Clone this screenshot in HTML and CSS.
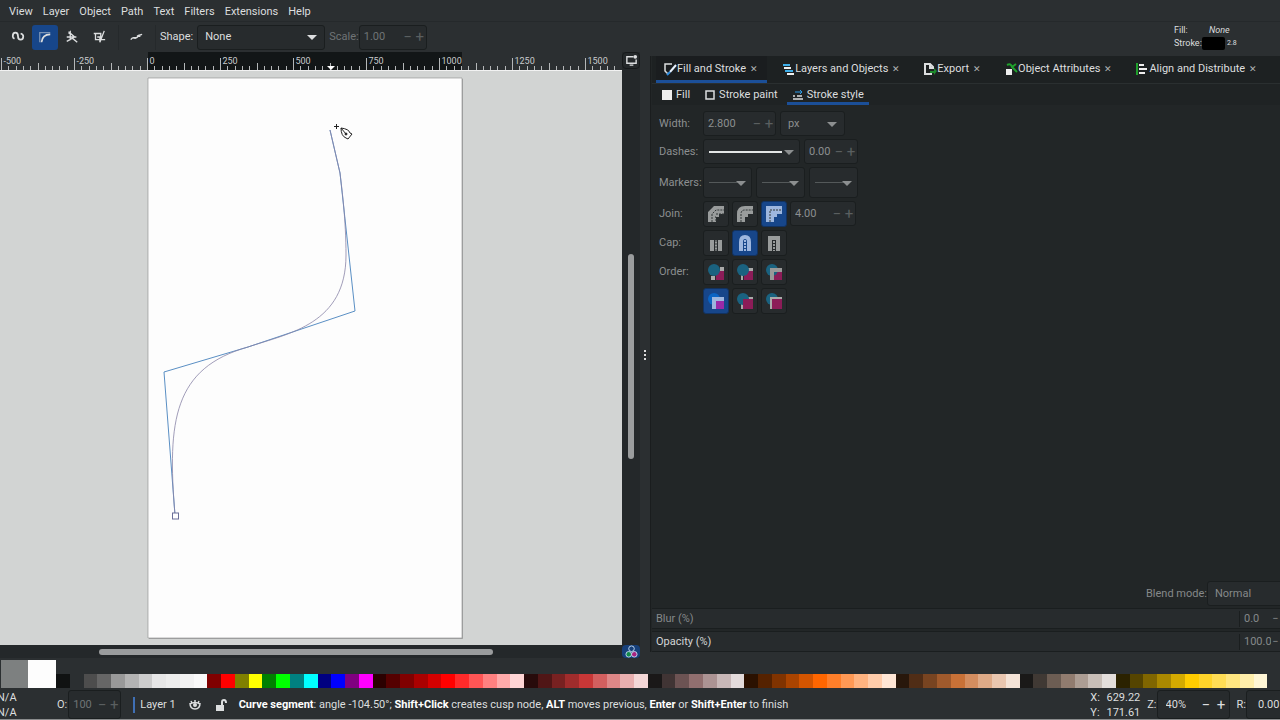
FILE: index.html
```
<!DOCTYPE html>
<html lang="en">
<head>
    <meta charset="UTF-8">
    <meta name="viewport" content="width=device-width, initial-scale=1.0">
    <title>Drawing - Inkscape</title>
    <link rel="stylesheet" href="styles.css">
</head>
<body>
    <svg class="defs" aria-hidden="true">
        <symbol id="join-bevel" viewBox="0 0 18 18"><path d="M1 17V7l6-6h10v8h-5v3H9v5z" fill="currentColor"/><path d="M5 17V9l4-4h8M9 9h8M8 12h1v5" class="dash"/></symbol>
        <symbol id="join-round" viewBox="0 0 18 18"><path d="M1 17V9q0-8 8-8h8v8h-5v3H9v5z" fill="currentColor"/><path d="M5 17V9q0-4 4-4h8" class="dash"/></symbol>
        <symbol id="join-miter" viewBox="0 0 18 18"><path d="M1 17V1h16v8h-5v3H9v5z" fill="currentColor"/><path d="M5 17V5h12" class="dash"/></symbol>
        <symbol id="cap-butt" viewBox="0 0 18 18"><path d="M3 6h4v11H3zM11 6h4v11h-4zM8 6h2v11H8z" fill="currentColor"/><path d="M9 6v11" class="dash"/></symbol>
        <symbol id="cap-round" viewBox="0 0 18 18"><path d="M5 17V8q0-5 4-5t4 5v9" fill="none" stroke="currentColor" stroke-width="4"/><path d="M9 6v11" stroke="currentColor" stroke-width="2" stroke-dasharray="2 1"/></symbol>
        <symbol id="cap-square" viewBox="0 0 18 18"><path d="M5 17V4h8v13" fill="none" stroke="currentColor" stroke-width="4"/><path d="M9 7v10" stroke="currentColor" stroke-width="2" stroke-dasharray="2 1"/></symbol>
    </svg>

    <nav class="menubar">
        <button>View</button>
        <button>Layer</button>
        <button>Object</button>
        <button>Path</button>
        <button>Text</button>
        <button>Filters</button>
        <button>Extensions</button>
        <button>Help</button>
    </nav>

    <header class="toolbar">
        <div class="modes">
            <button class="tool" aria-label="Bezier path"><svg viewBox="0 0 16 16"><path d="M4 10Q2 9 2 7q0-4 3-4 3 0 3 4t3 4q3 0 3-4 0-2-3-3" class="line bold"/></svg></button>
            <button class="tool active" aria-label="Spiro path"><svg viewBox="0 0 16 16"><path d="M2 14V3h12" class="line" opacity=".5"/><path d="M4 14q1-9 10-9" class="line bold"/></svg></button>
            <button class="tool" aria-label="Straight lines"><svg viewBox="0 0 16 16"><path d="M4 2l7 6-9 5 4-2V2l-2 2M2 8h11M8 9l6 5" class="line"/></svg></button>
            <button class="tool" aria-label="Paraxial lines"><svg viewBox="0 0 16 16"><path d="M2 4h8v7H4V4M14 1l-5 13V8H6M9 11h6" class="line"/></svg></button>
        </div>
        <button class="tool flatten" aria-label="Flatten spiro"><svg viewBox="0 0 16 16"><path d="M2 11q2-3 5-2 3 0 4-3l4-1" class="line"/><path d="M5 9h3M9 7h4" class="line bold"/></svg></button>
        <label for="shape">Shape:</label>
        <span class="select shape"><select id="shape"><option>None</option></select></span>
        <div class="field off">
            <label for="scale">Scale:</label>
            <span class="spin scale"><input id="scale" type="text" value="1.00"><button>−</button><button>+</button></span>
        </div>
        <div class="style-info">
            <span>Fill:</span><i>None</i>
            <span>Stroke:</span><span class="stroke-now"><b class="black"></b><small>2.8</small></span>
        </div>
    </header>

    <main class="workspace">
        <section class="editor">
            <svg class="ruler" id="ruler"></svg>
            <button class="corner" aria-label="Display mode"><svg viewBox="0 0 14 14"><path d="M9 3H2v7h10V6M5 12h4" class="line"/><circle cx="11" cy="3" r="2" fill="currentColor"/></svg></button>
            <svg class="canvas" viewBox="0 71 622 574" preserveAspectRatio="xMinYMin slice">
                <rect x="149" y="79" width="314" height="560" fill="#a4a6a5"/>
                <rect x="148" y="78" width="314" height="560" fill="#fdfdfd"/>
                <path d="M148 638V78h314v560z" fill="none" stroke="#8a8c8b" stroke-width=".6"/>
                <path d="M175 515L164 372 248 347 355 311 340 173 330 130" class="guide"/>
                <path d="M175 515C167 420 174 368 248 347C290 333 346 324 346 255C346 220 342 190 340 173L330 130" class="curve"/>
                <rect x="172.500" y="513" width="6" height="6" class="node"/>
                <g class="pen">
                    <path d="M334 126.500h5M336.500 124v5"/>
                    <path d="M341 128q8 1 9 5l2 1-4 5-2-1q-5-2-5-10z" fill="#fff"/>
                    <path d="M341 128l5 6"/>
                    <circle cx="346" cy="134" r="1" fill="#222"/>
                </g>
            </svg>
            <div class="scroll-v" role="scrollbar" aria-label="Vertical"><span></span></div>
            <div class="scroll-h" role="scrollbar" aria-label="Horizontal"><span></span></div>
            <button class="corner cms" aria-label="Color management"><svg viewBox="0 0 14 14"><circle cx="7" cy="4" r="3" class="ring"/><circle cx="4" cy="10" r="3" class="ring green"/><circle cx="10" cy="10" r="3" class="ring pink"/></svg></button>
        </section>

        <div class="splitter"><i></i><i></i><i></i></div>

        <section class="dock">
            <div class="tabs">
                <button class="tab active"><svg viewBox="0 0 14 14"><path d="M9 2H2v7l3 3" class="line"/><path d="M13 3L7 10" stroke="#e8f2ff" stroke-width="2"/><path d="M7 10l-3 3" stroke="#2d8ce0" stroke-width="2"/></svg>Fill and Stroke<span class="x">✕</span></button>
                <button class="tab"><svg viewBox="0 0 14 14"><path d="M2 3h7M4 9h8" stroke="#3daee9" stroke-width="2"/><path d="M3 6h7M6 12h7" stroke="#eee" stroke-width="2"/></svg>Layers and Objects<span class="x">✕</span></button>
                <button class="tab"><svg viewBox="0 0 14 14"><path d="M9 12H2V2h5l3 3v2M7 2v4h3" class="line bold"/><path d="M7 9h4V6l3 3-3 4v-2H7z" fill="#1d8a2c"/></svg>Export<span class="x">✕</span></button>
                <button class="tab"><svg viewBox="0 0 14 14"><path d="M2 7h6v6H2z" fill="#eee"/><path d="M3 3q4-2 5 2l5 5M8 5l4-3" stroke="#1fa02c" stroke-width="2" fill="none"/></svg>Object Attributes<span class="x">✕</span></button>
                <button class="tab"><svg viewBox="0 0 14 14"><path d="M2 1v12" stroke="#1fa02c" stroke-width="2"/><path d="M4 3h5M4 7h8M4 11h6" stroke="#eee" stroke-width="2"/></svg>Align and Distribute<span class="x">✕</span></button>
            </div>
            <div class="subtabs">
                <button class="subtab"><svg viewBox="0 0 12 12"><path d="M1 1h10v10H1z" fill="#eee"/></svg>Fill</button>
                <button class="subtab"><svg viewBox="0 0 12 12"><path d="M2 2h8v8H2z" class="line"/></svg>Stroke paint</button>
                <button class="subtab active"><svg viewBox="0 0 12 12"><path d="M3 3h7M8 1l2 2-2 2" stroke="#2d9ce8" fill="none"/><path d="M1 7h2M5 7h5M1 10h10" class="line"/></svg>Stroke style</button>
            </div>

            <form class="stroke-style">
                <label for="width">Width:</label>
                <div class="row">
                    <span class="spin width"><input id="width" type="text" value="2.800"><button type="button">−</button><button type="button">+</button></span>
                    <span class="select unit"><select aria-label="Unit"><option>px</option></select></span>
                </div>
                <label for="dashes">Dashes:</label>
                <div class="row">
                    <span class="select dashes"><select id="dashes"></select></span>
                    <span class="spin offset"><input type="text" value="0.00" aria-label="Dash offset"><button type="button">−</button><button type="button">+</button></span>
                </div>
                <label for="marker">Markers:</label>
                <div class="row markers">
                    <span class="select marker"><select id="marker"></select></span>
                    <span class="select marker"><select aria-label="Mid marker"></select></span>
                    <span class="select marker"><select aria-label="End marker"></select></span>
                </div>
                <span>Join:</span>
                <div class="row">
                    <button type="button" class="opt" aria-label="Bevel"><svg><use href="#join-bevel"/></svg></button>
                    <button type="button" class="opt" aria-label="Round"><svg><use href="#join-round"/></svg></button>
                    <button type="button" class="opt active" aria-label="Miter"><svg><use href="#join-miter"/></svg></button>
                    <span class="spin miter"><input type="text" value="4.00" aria-label="Miter limit"><button type="button">−</button><button type="button">+</button></span>
                </div>
                <span>Cap:</span>
                <div class="row">
                    <button type="button" class="opt" aria-label="Butt"><svg><use href="#cap-butt"/></svg></button>
                    <button type="button" class="opt active" aria-label="Round"><svg><use href="#cap-round"/></svg></button>
                    <button type="button" class="opt" aria-label="Square"><svg><use href="#cap-square"/></svg></button>
                </div>
                <span>Order:</span>
                <div class="row">
                    <button type="button" class="opt" aria-label="Fill, stroke, markers"><svg viewBox="0 0 18 18"><path d="M13 4h4v4h-4zM4 13h4v4H4z" fill="#aaa"/><path d="M9 8h8v9H9z" class="fillpart"/><circle cx="7" cy="7" r="6" class="mark"/></svg></button>
                    <button type="button" class="opt" aria-label="Stroke, fill, markers"><svg viewBox="0 0 18 18"><path d="M5 17V5h12v4H7v8z" fill="#aaa"/><path d="M8 8h9v9H8z" class="fillpart"/><circle cx="7" cy="7" r="6" class="mark"/></svg></button>
                    <button type="button" class="opt" aria-label="Fill, markers, stroke"><svg viewBox="0 0 18 18"><path d="M9 9h8v8H9z" class="fillpart"/><circle cx="7" cy="7" r="6" class="mark"/><path d="M5 17V5h12v4H9v8z" fill="#999"/></svg></button>
                </div>
                <span></span>
                <div class="row">
                    <button type="button" class="opt active" aria-label="Markers, fill, stroke"><svg viewBox="0 0 18 18"><circle cx="7" cy="7" r="6" fill="#0a64c4"/><path d="M9 9h8v8H9z" fill="#9a2aa8"/><path d="M5 17V5h12v4H9v8z" fill="#9db6de"/></svg></button>
                    <button type="button" class="opt" aria-label="Stroke, markers, fill"><svg viewBox="0 0 18 18"><path d="M5 17V5h12v2H7v10z" fill="#aaa"/><circle cx="7" cy="7" r="6" class="mark"/><path d="M7 7h10v10H7z" class="fillpart"/></svg></button>
                    <button type="button" class="opt" aria-label="Markers, stroke, fill"><svg viewBox="0 0 18 18"><circle cx="7" cy="7" r="6" class="mark"/><path d="M5 17V5h12v12z" fill="#aaa"/><path d="M7 7h10v10H7z" class="fillpart"/></svg></button>
                </div>
            </form>

            <div class="compositing">
                <div class="blend"><label for="blend">Blend mode:</label><span class="select mode"><select id="blend"><option>Normal</option></select></span></div>
                <div class="scalebar"><label for="blur">Blur (%)</label><input id="blur" type="text" value="0.0"><button>−</button></div>
                <div class="scalebar on"><label for="opacity">Opacity (%)</label><input id="opacity" type="text" value="100.0"><button>−</button></div>
            </div>
        </section>
    </main>

    <div class="palette">
        <span class="big gray"></span>
        <span class="big white"></span>
        <div class="swatches" id="swatches"></div>
    </div>

    <footer class="status">
        <div class="na"><span>N/A</span><span>N/A</span></div>
        <label for="o">O:</label>
        <span class="spin off o"><input id="o" type="text" value="100"><button>−</button><button>+</button></span>
        <button class="layer">Layer 1</button>
        <button class="eye" aria-label="Toggle visibility"><svg viewBox="0 0 14 14"><path d="M2 5q0 6 5 6t5-6M7 2v3M3 3l1 2M11 3l-1 2M2 6q5-3 10 0" class="line"/><circle cx="7" cy="7" r="2" fill="currentColor"/></svg></button>
        <button class="lock" aria-label="Toggle lock"><svg viewBox="0 0 14 14"><path d="M2 7h8v6H2z" fill="currentColor"/><path d="M8 7V4q0-2 2-2t2 3" class="line bold"/></svg></button>
        <p><b>Curve segment</b>: angle -104.50°; <b>Shift+Click</b> creates cusp node, <b>ALT</b> moves previous, <b>Enter</b> or <b>Shift+Enter</b> to finish</p>
        <div class="coords"><span>X:</span><span>629.22</span><span>Y:</span><span>171.61</span></div>
        <label for="zoom">Z:</label>
        <span class="spin zoom"><input id="zoom" type="text" value="40%"><button>−</button><button>+</button></span>
        <label for="rotate">R:</label>
        <span class="spin rotate"><input id="rotate" type="text" value="0.00°"></span>
    </footer>

    <script src="main.js"></script>
</body>
</html>
```
FILE: styles.css
```
* {
    box-sizing: border-box;
}
body {
    margin: 0;
    height: 100vh;
    overflow: hidden;
    display: flex;
    flex-direction: column;
    background: #2b2f31;
    color: #dcdedf;
    font-family: Roboto, "Open Sans", sans-serif;
    font-size: 11px;
    line-height: 16px;
    border-bottom: 1px solid #8a8c8d;
}
button, input, select {
    font: inherit;
    color: inherit;
    background: none;
    border: 0;
    padding: 0;
    margin: 0;
    min-width: 0;
}
svg {
    display: block;
    flex: none;
}
label, button {
    white-space: nowrap;
}
.defs {
    position: absolute;
    width: 0;
    height: 0;
}
.line {
    fill: none;
    stroke: currentColor;
    stroke-width: 1.5;
}
.bold {
    stroke-width: 2;
}
.dash {
    fill: none;
    stroke: #333839;
    stroke-dasharray: 2 1;
}

/* menu and tool options */
.menubar {
    height: 22px;
    flex: none;
    display: flex;
    align-items: center;
    gap: 10px;
    padding: 2px 0 0 9px;
    border-bottom: 1px solid #25292b;
}
.toolbar {
    height: 30px;
    flex: none;
    display: flex;
    align-items: center;
    gap: 4px;
}
.modes {
    display: flex;
    gap: 1px;
    padding: 0 6px 0 5px;
    border-right: 1px solid #25292b;
}
.tool {
    width: 26px;
    height: 25px;
    display: grid;
    place-items: center;
    border-radius: 3px;
}
.tool svg {
    width: 14px;
    height: 14px;
}
.active.tool, .active.opt {
    background: #17468a;
    border-color: #123260;
}
.flatten {
    width: 33px;
    padding-right: 6px;
    border-right: 1px solid #25292b;
    border-radius: 0;
}
.off {
    color: #6f7476;
}
.field {
    display: flex;
    align-items: center;
}
.select, .spin {
    display: flex;
    align-items: center;
    height: 25px;
    border: 1px solid #1a1e1f;
    border-radius: 3px;
    background: #272b2d;
}
.select {
    position: relative;
}
.select select {
    appearance: none;
    width: 100%;
    height: 100%;
    padding-left: 7px;
}
.select::after {
    content: "";
    position: absolute;
    right: 7px;
    top: 50%;
    margin-top: -2px;
    border: 5px solid transparent;
    border-top-color: currentColor;
    border-bottom: 0;
    pointer-events: none;
}
.spin input {
    flex: 1;
    width: 0;
    padding-left: 4px;
}
.spin button {
    width: 12px;
    font-size: 15px;
}
.off button, .stroke-style .spin button {
    color: #5a5f60;
}
.shape {
    width: 128px;
}
.scale {
    width: 68px;
}
.style-info {
    margin-left: auto;
    margin-right: 42px;
    display: grid;
    grid-template-columns: 28px 36px;
    font-size: 9px;
    line-height: 13px;
}
.style-info i {
    padding-left: 7px;
}
.stroke-now {
    display: flex;
    gap: 2px;
}
.stroke-now small {
    font-size: 7px;
}
.black {
    width: 23px;
    height: 13px;
    flex: none;
    border-radius: 2px;
    background: #000;
}

/* editor */
.workspace {
    flex: 1;
    min-height: 0;
    display: grid;
    grid-template-columns: minmax(0, 64fr) 10px minmax(0, 63fr);
}
.editor {
    min-height: 0;
    display: grid;
    grid-template-columns: minmax(0, 1fr) 18px;
    grid-template-rows: 19px minmax(0, 1fr) 13px;
    background: #24282a;
}
.ruler {
    width: 100%;
    height: 19px;
    background: #2b2f31;
    border-bottom: 1px solid #f2f2f2;
}
.ruler text {
    fill: #c8cbcc;
    font-size: 9px;
}
.canvas {
    width: 100%;
    height: 100%;
    background: #d2d4d3;
}
.guide {
    fill: none;
    stroke: #5a8fc4;
    stroke-width: 1;
}
.curve {
    fill: none;
    stroke: #8a84a8;
    stroke-width: 1;
    opacity: .8;
}
.node {
    fill: #fff;
    stroke: #6a6e98;
}
.pen {
    fill: none;
    stroke: #222;
}
.corner {
    display: grid;
    place-items: center;
    border: 1px solid #16191a;
    border-radius: 4px;
    height: 17px;
}
.corner svg {
    width: 13px;
    height: 13px;
}
.cms {
    height: 13px;
    background: #17407a;
    border: 0;
}
.ring {
    fill: none;
    stroke: #c4dcf4;
}
.green {
    fill: #118a4a;
}
.pink {
    fill: #a82480;
}
.scroll-v {
    display: grid;
    grid-template-rows: 183fr 205fr 186fr;
    justify-content: center;
}
.scroll-v span {
    grid-row: 2;
    width: 6px;
    border-radius: 3px;
    background: #9a9c9d;
}
.scroll-h {
    display: grid;
    grid-template-columns: 99fr 394fr 129fr;
    align-content: center;
}
.scroll-h span {
    grid-column: 2;
    height: 6px;
    border-radius: 3px;
    background: #9a9c9d;
}
.splitter {
    display: flex;
    flex-direction: column;
    align-items: center;
    justify-content: center;
    gap: 2px;
}
.splitter i {
    width: 2px;
    height: 2px;
    background: #ddd;
}

/* dock */
.dock {
    min-height: 0;
    display: flex;
    flex-direction: column;
    margin: 4px 0 6px;
    padding-left: 1px;
    background: #222627;
    border-left: 1px solid #1a1d1e;
    overflow: hidden;
}
.tabs {
    height: 28px;
    flex: none;
    display: flex;
    gap: 7px;
    padding-left: 4px;
    background: #1d2122;
    border-bottom: 1px solid #2a2f30;
}
.tab, .subtab {
    display: flex;
    flex: none;
    align-items: center;
    border-bottom: 3px solid transparent;
}
.tab {
    height: 27px;
    padding: 2px 9px 0 7px;
}
.tab svg {
    width: 14px;
    height: 14px;
}
.tab .x {
    margin-left: 4px;
    font-size: 9px;
    color: #b0b3b4;
}
.tab.active, .subtab.active {
    border-bottom-color: #1b4f98;
}
.tab.active {
    background: #1a1d1f;
}
.subtabs {
    height: 21px;
    flex: none;
    display: flex;
    gap: 4px;
    padding-left: 4px;
    background: #1f2324;
}
.subtab {
    gap: 3px;
    padding: 3px 5px 0;
}
.subtab svg {
    width: 12px;
    height: 12px;
}
.stroke-style {
    flex: 1;
    display: grid;
    grid-template-columns: 41px 1fr;
    align-content: start;
    align-items: center;
    gap: 3px;
    padding: 6px 0 0 7px;
    color: #8c8f90;
}
.row {
    display: flex;
    gap: 4px;
}
.row .opt {
    margin-right: -1px;
}
.width {
    width: 73px;
}
.unit {
    width: 65px;
}
.dashes {
    width: 97px;
}
.offset {
    width: 54px;
}
.markers .select {
    width: 49px;
    height: 31px;
}
.dashes::before, .marker::before {
    content: "";
    position: absolute;
    left: 5px;
    width: 73px;
    height: 2px;
    background: #e4e6e6;
}
.marker::before {
    width: 29px;
    height: 1px;
    background: #54595a;
}
.marker::after, .dashes::after {
    right: 5px;
}
.miter {
    width: 66px;
}
.opt {
    width: 26px;
    height: 26px;
    display: grid;
    place-items: center;
    border: 1px solid #1a1e1f;
    border-radius: 3px;
    background: #272b2d;
    color: #999c9c;
}
.opt svg {
    width: 18px;
    height: 18px;
}
.opt.active {
    color: #9db6de;
}
.mark {
    fill: #1a6280;
}
.fillpart {
    fill: #8c1c58;
}
.compositing {
    display: flex;
    flex-direction: column;
    gap: 2px;
    color: #85898a;
}
.blend {
    display: flex;
    align-items: center;
    justify-content: flex-end;
    margin-right: -24px;
}
.mode {
    width: 97px;
}
.scalebar {
    height: 21px;
    display: grid;
    grid-template-columns: 1fr 31px 9px;
    align-items: center;
    background: #272b2d;
    border: 1px solid #1a1e1f;
    border-width: 1px 0;
}
.scalebar label {
    padding-left: 4px;
    border-right: 1px solid #1a1e1f;
}
.scalebar input {
    width: 100%;
    padding-left: 4px;
}
.on label {
    color: #d4d6d7;
}

/* palette */
.palette {
    height: 30px;
    flex: none;
    display: flex;
    align-items: flex-end;
    padding-right: 13px;
}
.big {
    width: 27px;
    height: 28px;
}
.gray {
    margin-left: 1px;
    background: #7d8080;
}
.white {
    width: 28px;
    background: #fdfdfd;
}
.swatches {
    flex: 1;
    display: flex;
    height: 14px;
}
.swatches span {
    flex: 1;
}

/* status */
.status {
    height: 31px;
    flex: none;
    display: flex;
    align-items: center;
    padding-top: 2px;
    overflow: hidden;
}
.na {
    width: 57px;
    display: grid;
    line-height: 15px;
    text-indent: -3px;
}
.status .spin {
    height: 29px;
}
.o {
    width: 53px;
    margin-left: 1px;
}
.layer {
    margin-left: 12px;
    padding-left: 5px;
    border-left: 2px solid #3f6fb4;
}
.eye, .lock {
    margin-left: 12px;
}
.eye svg, .lock svg {
    width: 14px;
    height: 14px;
}
.status p {
    flex: 1;
    margin: 0 0 0 11px;
    white-space: nowrap;
}
.status p b {
    color: #fff;
}
.coords {
    display: grid;
    grid-template-columns: 14px 36px;
    line-height: 15px;
    margin-right: 7px;
    text-align: right;
}
.coords span:nth-child(odd) {
    text-align: left;
}
.zoom {
    width: 73px;
    margin-right: 7px;
}
.zoom input {
    padding-left: 8px;
}
.zoom button {
    width: 15px;
}
.rotate {
    width: 42px;
    margin-right: -8px;
}
.rotate input {
    padding-left: 11px;
}
```
FILE: main.js
```
var svgNS = "http://www.w3.org/2000/svg";
var ruler = document.getElementById("ruler");
var origin = 148;
var step = 73 / 250;

function add(name, attrs, text) {
    var el = document.createElementNS(svgNS, name);
    for (var key in attrs) {
        el.setAttribute(key, attrs[key]);
    }
    if (text !== undefined) {
        el.textContent = text;
    }
    ruler.appendChild(el);
}

// page extent
add("rect", { x: origin, y: 0, width: 314, height: 18, fill: "#121617" });

for (var u = -500; u <= 1600; u += 25) {
    var x = Math.round(origin + u * step) - 0.5;
    var tickTop = u % 250 === 0 ? 6 : u % 125 === 0 ? 11 : 14;
    add("path", { d: "M" + x + " " + tickTop + "V18", stroke: "#b4b7b8" });
    if (u % 250 === 0) {
        add("text", { x: x + 2, y: 12 }, u);
    }
}

// pointer position
add("path", { d: "M327 14h8l-4 4z", fill: "#fff" });

var colors = [
    "#101212", "#2b2f31", "#4d4d4d", "#666666", "#999999", "#b3b3b3", "#cccccc", "#e6e6e6", "#ececec", "#f2f2f2", "#f9f9f9",
    "#800000", "#ff0000", "#808000", "#ffff00", "#008000", "#00ff00", "#008080", "#00ffff", "#000080", "#0000ff", "#800080", "#ff00ff",
    "#2b0000", "#550000", "#800000", "#aa0000", "#d40000", "#ff0000", "#ff2a2a", "#ff5555", "#ff8080", "#ffaaaa", "#ffd5d5",
    "#280b0b", "#501616", "#782121", "#a02c2c", "#c83737", "#d35f5f", "#de8787", "#e9afaf", "#f4d7d7",
    "#1a1818", "#403434", "#6c5353", "#916f6f", "#ac9393", "#c8b7b7", "#e3dbdb",
    "#2b1100", "#552200", "#803300", "#aa4400", "#d45500", "#ff6600", "#ff7f2a", "#ff9955", "#ffb380", "#ffccaa", "#ffe6d5",
    "#28170b", "#502d16", "#784421", "#a05a2c", "#c87137", "#d38d5f", "#deaa87", "#e9c6af", "#f4e3d7",
    "#1a1918", "#403934", "#6c5d53", "#917c6f", "#ac9d93", "#c8beb7", "#e3dedb",
    "#2b2200", "#554400", "#806600", "#aa8800", "#d4aa00", "#ffcc00", "#ffd42a", "#ffdd55", "#ffe680", "#ffeeaa", "#fff6d5"
];

var swatches = document.getElementById("swatches");
colors.forEach(function(color) {
    var span = document.createElement("span");
    span.style.background = color;
    swatches.appendChild(span);
});
```
